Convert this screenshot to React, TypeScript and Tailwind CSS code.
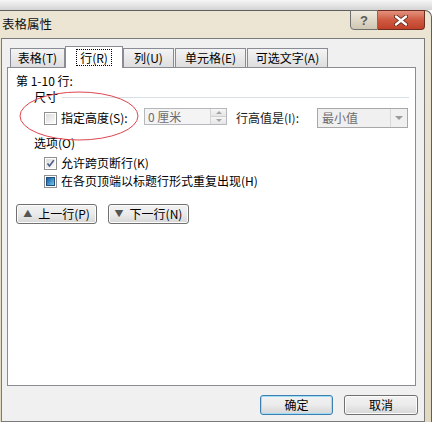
import React from "react";

const font = "font-['Noto_Sans_CJK_SC','Liberation_Sans',sans-serif]";

function Tab({ label, width, active, className = "" }: { label: string; width: number; active?: boolean; className?: string }) {
  if (active) {
    return (
      <div
        className={`h-[22px] border border-b-0 border-[#898c95] bg-white flex items-center justify-center ${className}`}
        style={{ width }}
      >
        <span className="border border-dotted border-black px-[3px] h-[17px] leading-[15px] mt-[-1px]">{label}</span>
      </div>
    );
  }
  return (
    <div
      className={`h-[19px] mb-[1px] border border-b-0 border-[#898c95] bg-gradient-to-b from-[#f4f4f4] to-[#dedede] flex items-center justify-center leading-[16px] ${className}`}
      style={{ width }}
    >
      {label}
    </div>
  );
}

function CheckBox({ state }: { state: "off" | "on" | "mixed" }) {
  return (
    <div className="w-[13px] h-[13px] border border-[#8f8f8f] bg-white p-[1px] shrink-0">
      {state === "mixed" ? (
        <div className="w-full h-full border border-[#1e4e7d] bg-gradient-to-br from-[#1b5a9a] via-[#3f90c8] to-[#7cc6ea]" />
      ) : (
        <div className="w-full h-full bg-gradient-to-br from-[#dcdcdc] to-[#fbfbfb] relative">
          {state === "on" && (
            <svg viewBox="0 0 9 9" className="absolute inset-0 w-[9px] h-[9px]">
              <path d="M1.5 4.5 L3.5 7 L7.8 1.2" fill="none" stroke="#4a5d8a" strokeWidth="1.6" />
            </svg>
          )}
        </div>
      )}
    </div>
  );
}

function Button({ children, className = "", focused }: { children: React.ReactNode; className?: string; focused?: boolean }) {
  return (
    <div
      className={`h-[20px] rounded-[3px] border ${
        focused ? "border-[#3c7fb1] shadow-[inset_0_0_0_1px_#9fdcf8]" : "border-[#707070] shadow-[inset_0_0_0_1px_#fcfcfc]"
      } bg-gradient-to-b from-[#f2f2f2] via-[#ebebeb] to-[#d6d6d6] flex items-center justify-center leading-[16px] ${className}`}
    >
      {children}
    </div>
  );
}

export default function App() {
  return (
    <div className={`relative w-[432px] h-[422px] overflow-hidden text-[12px] text-black ${font}`}>
      <div className="h-[10px] bg-gradient-to-b from-[#f6f6f6] to-[#d4d4d4]" />
      <div className="h-[412px] flex flex-col bg-gradient-to-b from-[#ece5d3] to-[#e2d9c2] border-t border-r border-[#5e5e5e] rounded-tr-[7px]">
        <div className="h-[27px] flex items-start justify-between pr-[6px]">
          <div className="mt-[5px] ml-[2px] text-[12.5px] leading-[15px] text-[#101010]">表格属性</div>
          <div className="flex mt-[-1px]">
            <div className="w-[28px] h-[20px] border border-[#707070] rounded-bl-[4px] bg-gradient-to-b from-[#f0ebdf] to-[#cfc6b2] flex items-center justify-center text-[13px] font-bold text-[#5a5a5a] leading-none font-['Liberation_Sans',sans-serif]">
              ?
            </div>
            <div className="w-[47px] h-[20px] border border-l-0 border-[#6e2f22] rounded-br-[4px] bg-gradient-to-b from-[#e3917e] via-[#cf5a40] to-[#c0402a] flex items-center justify-center">
              <svg viewBox="0 0 14 11" className="w-[14px] h-[11px]">
                <path d="M2 1.5 L12 9.5 M12 1.5 L2 9.5" stroke="#5a2015" strokeWidth="4" strokeLinecap="round" />
                <path d="M2 1.5 L12 9.5 M12 1.5 L2 9.5" stroke="#ffffff" strokeWidth="2.4" strokeLinecap="round" />
              </svg>
            </div>
          </div>
        </div>
        <div className="flex-1 ml-[1px] mr-[6px] border border-[#7a7a7a] bg-[#f0f0f0] flex flex-col">
          <div className="mt-[7px] mb-[-1px] ml-[8px] flex items-end relative z-10 h-[22px]">
            <Tab label="表格(T)" width={55} />
            <Tab label="行(R)" width={58} active />
            <Tab label="列(U)" width={51} />
            <Tab label="单元格(E)" width={71} className="ml-[1px]" />
            <Tab label="可选文字(A)" width={81} className="ml-[1px]" />
          </div>
          <div className="ml-[5px] w-[409px] h-[319px] border border-[#898c95] bg-white flex flex-col">
            <div className="mt-[5px] pl-[8px] h-[16px] leading-[16px]">第 1-10 行:</div>
            <div className="pl-[26px] pr-[6px] h-[16px] flex items-center">
              <span className="leading-[16px]">尺寸</span>
              <div className="flex-1 ml-[4px] h-px bg-[#d5dfe5]" />
            </div>
            <div className="mt-[3px] h-[20px] pl-[36px] flex items-center">
              <CheckBox state="off" />
              <span className="ml-[4px] w-[83px] leading-[16px]">指定高度(S):</span>
              <div className="w-[83px] h-[17px] mt-[-3px] border border-[#b5b8bc] bg-[#f4f4f4] flex">
                <span className="flex-1 pl-[3px] leading-[15px] text-[#6d6d6d]">0 厘米</span>
                <div className="w-[16px] flex flex-col border-l border-[#d4d4d4]">
                  <div className="flex-1 flex items-center justify-center bg-gradient-to-b from-[#f6f6f6] to-[#e6e6e6] border-b border-[#d0d0d0]">
                    <div className="w-0 h-0 border-x-[3px] border-x-transparent border-b-[3px] border-b-[#a6a6a6]" />
                  </div>
                  <div className="flex-1 flex items-center justify-center bg-gradient-to-b from-[#f6f6f6] to-[#e6e6e6]">
                    <div className="w-0 h-0 border-x-[3px] border-x-transparent border-t-[3px] border-t-[#a6a6a6]" />
                  </div>
                </div>
              </div>
              <span className="ml-[9px] w-[81px] leading-[16px] text-[#1a1a1a]">行高值是(I):</span>
              <div className="w-[91px] h-[20px] border border-[#a8a8a8] bg-[#f0f0f0] flex">
                <span className="flex-1 pl-[4px] leading-[18px] text-[#6d6d6d]">最小值</span>
                <div className="w-[17px] flex items-center justify-center border-l border-[#d8d8d8]">
                  <div className="w-0 h-0 border-x-[4px] border-x-transparent border-t-[4px] border-t-[#9a9a9a]" />
                </div>
              </div>
            </div>
            <div className="mt-[7px] pl-[26px] h-[16px] leading-[16px]">选项(O)</div>
            <div className="mt-[4px] pl-[36px] h-[16px] flex items-center">
              <CheckBox state="on" />
              <span className="ml-[4px] leading-[16px]">允许跨页断行(K)</span>
            </div>
            <div className="mt-[2px] pl-[36px] h-[16px] flex items-center">
              <CheckBox state="mixed" />
              <span className="ml-[4px] leading-[16px]">在各页顶端以标题行形式重复出现(H)</span>
            </div>
            <div className="mt-[15px] pl-[8px] flex gap-[11px]">
              <Button className="w-[81px]">
                <span className="text-[#555] text-[9px] mr-[6px]">▲</span>上一行(P)
              </Button>
              <Button className="w-[81px]">
                <span className="text-[#555] text-[9px] mr-[6px]">▼</span>下一行(N)
              </Button>
            </div>
          </div>
          <div className="mt-[9px] flex justify-end gap-[11px] pr-[6px]">
            <Button className="w-[73px]" focused>确定</Button>
            <Button className="w-[74px]">取消</Button>
          </div>
        </div>
      </div>
      <svg className="absolute left-0 top-0 pointer-events-none" width="432" height="422">
        <ellipse cx="79" cy="116" rx="59" ry="24" fill="none" stroke="#e0454f" strokeWidth="1" />
      </svg>
    </div>
  );
}
